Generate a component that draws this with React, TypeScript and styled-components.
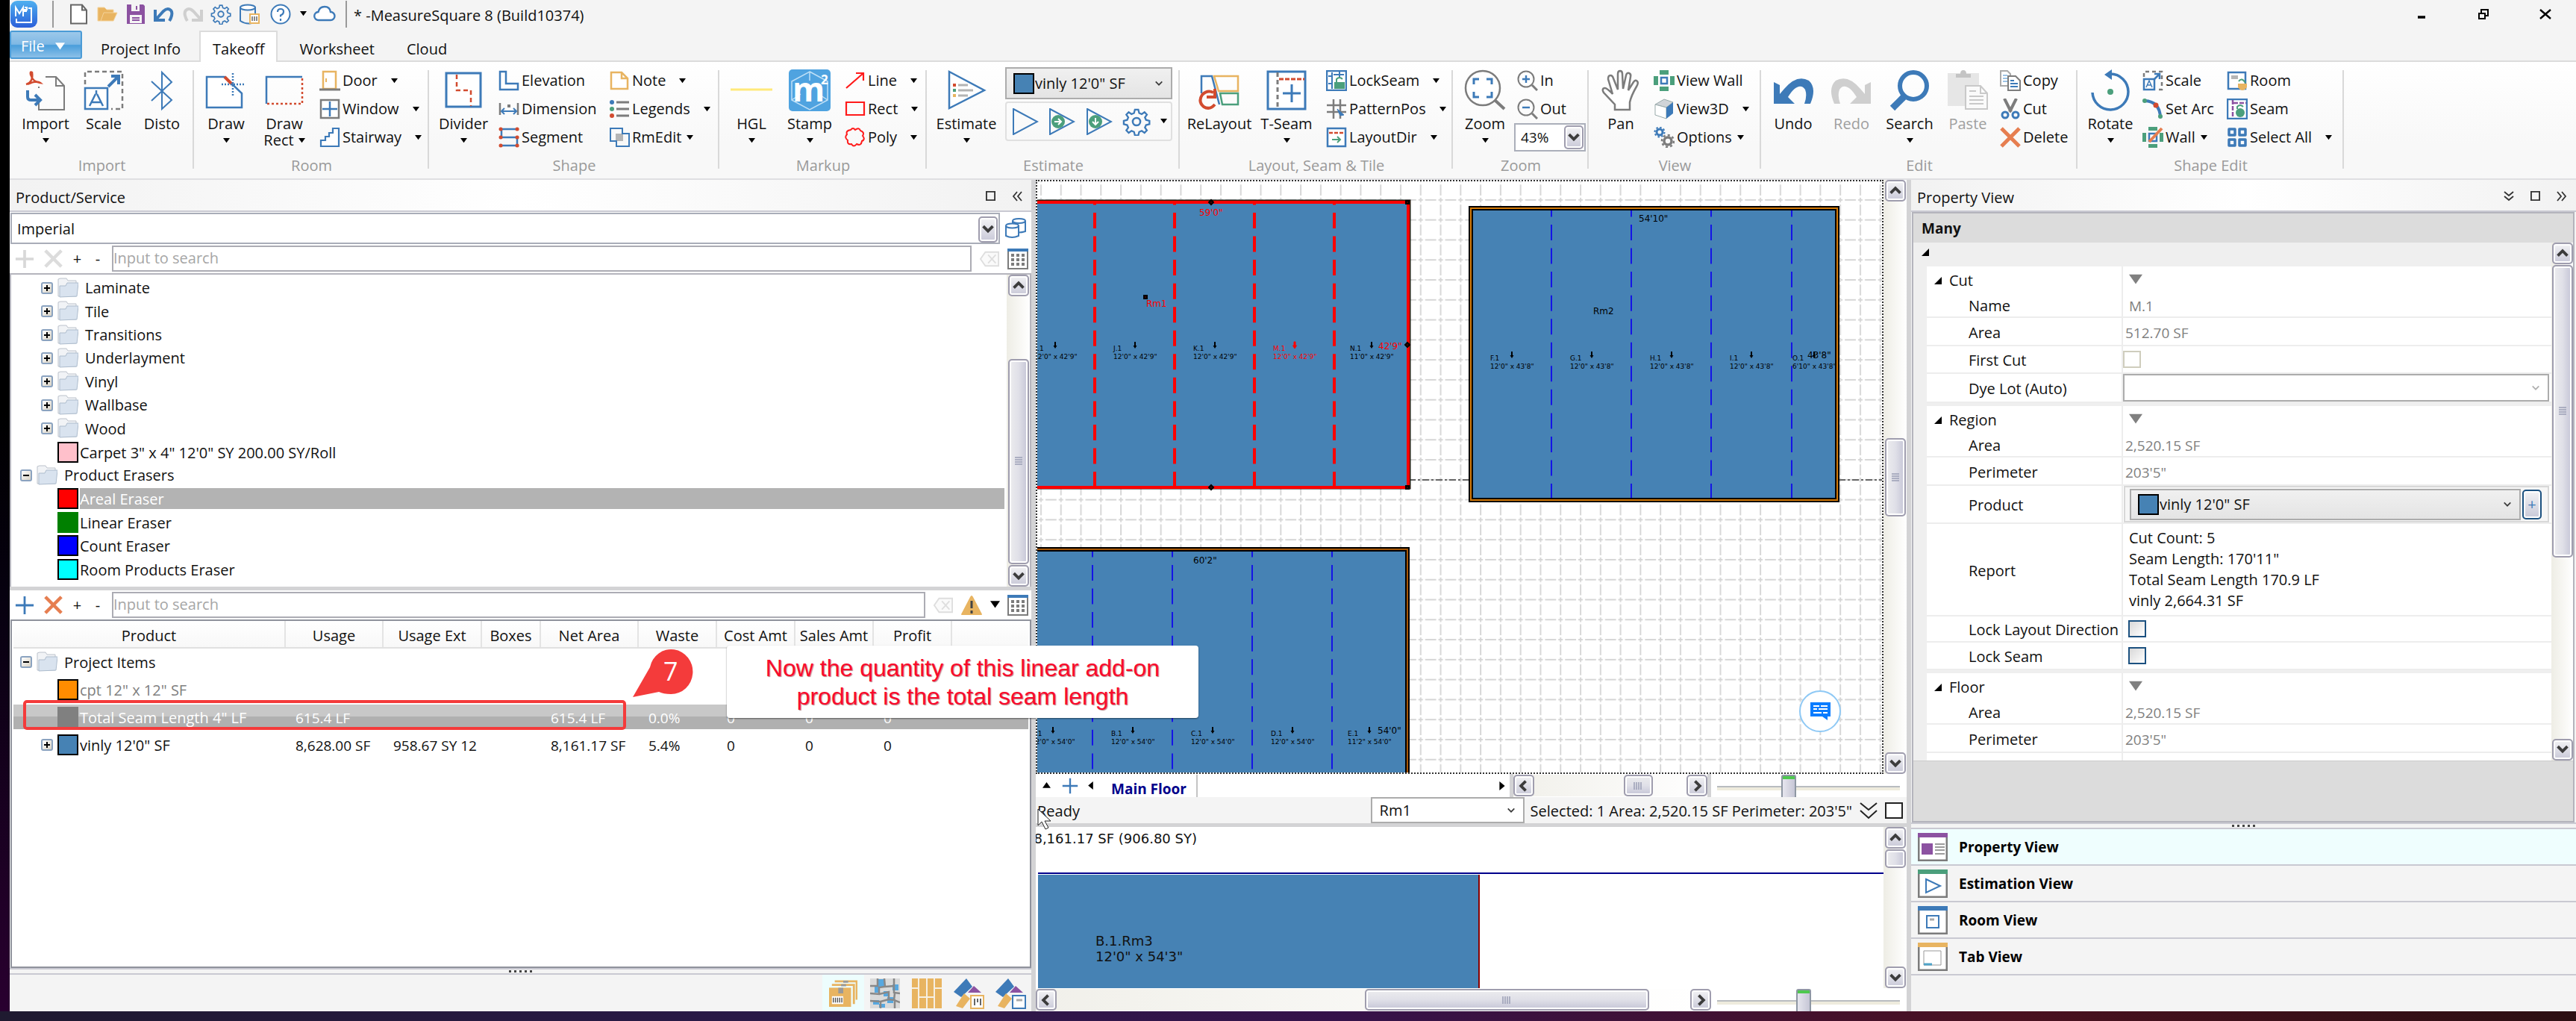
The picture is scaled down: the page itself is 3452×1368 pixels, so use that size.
import React from "react";
import styled, { createGlobalStyle, css } from "styled-components";

const BLUE = "#3d7ab8";
const GRAY = "#7c7c7c";
const RED = "#d24b2f";
const GREEN = "#4b9f7c";
const GOLD = "#e8b461";
const PURPLE = "#8c52a1";
const STEEL = "#4682b4";
const SPLIT = "#d3d3d5";
const LINE = "#c9c9d2";

const Global = createGlobalStyle`
  *, *::before, *::after { box-sizing: border-box; }
  body { margin: 0; background: #05010c; }
  body, button, input, select, table {
    font-family: "Open Sans", "Noto Sans", "Liberation Sans", sans-serif;
    font-size: 20px;
    line-height: 22px;
    color: #111;
  }
  button { border: 0; padding: 0; background: none; }
  svg { display: block; flex: none; }
`;

/* ---------- icons ---------- */

const gearPath =
  "M12 2h4l1 4 3 1.300 3.300-2.300 2.800 2.800-2.300 3.300 1.300 3 4 1v4l-4 1-1.300 3 2.300 3.300-2.800 2.800-3.300-2.300-3 1.300-1 4h-4l-1-4-3-1.300-3.300 2.300-2.800-2.800 2.300-3.300-1.300-3-4-1v-4l4-1 1.300-3-2.300-3.300 2.800-2.800 3.300 2.300 3-1.300z";

const art: Record<string, { box: string; draw: React.ReactNode }> = {
  logo: {
    box: "0 0 36 36",
    draw: (
      <>
        <defs>
          <linearGradient id="logo" x1="0" y1="0" x2="0" y2="1">
            <stop offset="0" stopColor="#4fb0f0" />
            <stop offset="1" stopColor="#2b5fd9" />
          </linearGradient>
        </defs>
        <rect width="36" height="36" rx="9" fill="url(#logo)" />
        <path d="M7 21V9l5 8 5-8v12M8 24v5h20V10h-4M19 9h3v3h-3v2h3" fill="none" stroke="#fff" strokeWidth="2" />
      </>
    ),
  },
  file: { box: "0 0 28 28", draw: <path d="M3 1.500h15l6 7v18H3zM18 1.500v7h6" fill="#fff" stroke="#666" strokeWidth="2" /> },
  folder: { box: "0 0 28 28", draw: <path d="M1 23V5h9l3 3h9v4h5l-5 11zM5 23l4-11h13" fill={GOLD} stroke="#f4d29a" /> },
  save: {
    box: "0 0 28 28",
    draw: (
      <>
        <path d="M2 1h22l2 2v24H2z" fill={PURPLE} />
        <path d="M8 1h11v9H8zM6 15h16v11H6z" fill="#f4f4f4" />
        <path d="M15 3v5M9 19h10M9 22h10" stroke={PURPLE} strokeWidth="2" />
      </>
    ),
  },
  undoS: { box: "0 0 28 28", draw: <path d="M2 8v14h13M3 21L13 10c6-6 13-2 11 6q-1 4-3 7" fill="none" stroke={BLUE} strokeWidth="4" /> },
  redoS: { box: "0 0 28 28", draw: <path d="M26 8v14H13M25 21L15 10C9 4 2 8 4 16q1 4 3 7" fill="none" stroke="#cfcfcf" strokeWidth="4" /> },
  gear: {
    box: "-1 1 30 30",
    draw: (
      <g fill="none" stroke={BLUE} strokeWidth="2">
        <path d={gearPath} transform="translate(1.500 1.500) scale(.9)" />
        <circle cx="14" cy="16" r="4" />
      </g>
    ),
  },
  dbSave: {
    box: "0 0 28 28",
    draw: (
      <>
        <path d="M2 5v18q8 5 15 3M22 5v8" fill="none" stroke={BLUE} strokeWidth="2" />
        <ellipse cx="12" cy="5" rx="10" ry="3.500" fill="#fff" stroke={BLUE} strokeWidth="2" />
        <path d="M15 14h12v12H15z" fill="#fff" stroke={GOLD} strokeWidth="2" />
        <path d="M18 17v6M21 17v6M24 17v6" stroke="#666" strokeWidth="1.500" />
      </>
    ),
  },
  help: {
    box: "0 0 28 28",
    draw: (
      <>
        <circle cx="14" cy="14" r="12.500" fill="#fff" stroke={BLUE} strokeWidth="2" />
        <path d="M10 11q0-4 4-4t4 3.500-4 5v2M14 20v3" fill="none" stroke={BLUE} strokeWidth="2.200" />
      </>
    ),
  },
  cloud: { box: "0 0 30 28", draw: <path d="M7 22a5.500 5.500 0 0 1-.5-11Q8 4 15 4q7 0 8 7a5.500 5.500 0 0 1 0 11z" fill="#fff" stroke={BLUE} strokeWidth="2.400" /> },
  importB: {
    box: "0 0 56 56",
    draw: (
      <g fill="none" strokeWidth="2">
        <path d="M19 25v-2M19 45v9h34V22L42 10H28M42 10v12h11" stroke={GRAY} />
        <path d="M2 20q10-3 8-16-3-2-2 3 3 10 13 11-5-4-17 2" stroke={RED} strokeWidth="2.500" />
        <path d="M4 28v9q0 4 5 4h10M14 34l7 7-7 7" stroke={BLUE} strokeWidth="4" />
      </g>
    ),
  },
  scaleB: {
    box: "0 0 56 56",
    draw: (
      <g fill="none" strokeWidth="2.500">
        <path d="M3 20V3h50v50H38" stroke={GRAY} strokeDasharray="6 4" />
        <path d="M3 25h30v28H3z" stroke={BLUE} fill="#fff" />
        <path d="M18 28v5M17 33L9 49M19 33l8 16M11 44h14" stroke={BLUE} />
        <path d="M34 23L48 9M38 9h10v11" stroke={BLUE} strokeWidth="4" />
      </g>
    ),
  },
  disto: { box: "0 0 56 56", draw: <path d="M14 16l27 25-13 12V4l13 13-27 25" fill="none" stroke={BLUE} strokeWidth="2" /> },
  drawB: {
    box: "0 0 56 56",
    draw: (
      <g fill="none" strokeWidth="2.500">
        <path d="M2 10h24l23 22v19H2z" stroke={BLUE} fill="#fff" />
        <path d="M26 10l10 10" stroke={RED} strokeWidth="4" />
        <path d="M37 5v32M22 20h32" stroke={BLUE} strokeDasharray="2 2" />
      </g>
    ),
  },
  drawRect: {
    box: "0 0 56 56",
    draw: (
      <g fill="none" strokeWidth="2.500">
        <path d="M4 46V10h48" stroke={BLUE} />
        <path d="M52 12v34H4" stroke={RED} strokeDasharray="3 3" />
      </g>
    ),
  },
  divider: {
    box: "0 0 56 56",
    draw: (
      <g fill="none" strokeWidth="3">
        <path d="M5 5h46v45H5z" stroke={BLUE} fill="#fff" />
        <path d="M19 7v21h19v21" stroke={RED} strokeDasharray="6 4" strokeWidth="2.500" />
      </g>
    ),
  },
  hgl: { box: "0 0 56 56", draw: <path d="M0 27h56" stroke="#ffe97a" strokeWidth="3" /> },
  stamp: {
    box: "0 0 56 56",
    draw: (
      <>
        <rect width="56" height="56" rx="5" fill="#4fa3e0" />
        <path d="M28 3l24 13v25L28 54 4 41V16zM28 3v12M4 41l12-8M52 41l-12-8" fill="none" stroke="#bfe0f7" strokeWidth="1.500" />
        <text x="5" y="43" fontSize="44" fontWeight="700" fill="#fff">m</text>
        <text x="43" y="20" fontSize="17" fontWeight="700" fill="#fff">2</text>
      </>
    ),
  },
  estimateB: {
    box: "0 0 56 56",
    draw: (
      <>
        <path d="M5 3l47 25L5 52z" fill="#fff" stroke={BLUE} strokeWidth="2.500" />
        <path d="M17 21h13M17 28h20M17 35h13" stroke="#b3b3b3" strokeWidth="3" />
        <path d="M10 19v4h4v-4z" fill={RED} />
        <path d="M10 26v4h4v-4z" fill={GREEN} />
        <path d="M10 33v4h4v-4z" fill={GOLD} />
      </>
    ),
  },
  relayout: {
    box: "0 0 56 56",
    draw: (
      <g fill="none" strokeWidth="2.500">
        <path d="M4 32V9h14l10 38" stroke={BLUE} />
        <path d="M21 9h32v20H27z" stroke={GOLD} />
        <path d="M29 32h24v15H32z" stroke={GREEN} />
        <path d="M20 31q-8-4-15 3-6 9 2 16 8 5 15-3M22 26v11H11" stroke={RED} strokeWidth="4" />
      </g>
    ),
  },
  tseam: {
    box: "0 0 56 56",
    draw: (
      <g fill="none" strokeWidth="3">
        <path d="M3 3h50v50H3z" stroke={BLUE} fill="#fff" />
        <path d="M16 4v48" stroke={GRAY} strokeDasharray="6 4" />
        <path d="M18 13h34" stroke={RED} strokeDasharray="6 2" />
        <path d="M35 20v24M23 32h24" stroke={BLUE} />
      </g>
    ),
  },
  zoomB: {
    box: "0 0 56 56",
    draw: (
      <g fill="none" strokeWidth="2.500">
        <circle cx="25" cy="25" r="23" stroke={GRAY} fill="#fff" />
        <path d="M41 41l13 12" stroke={GRAY} strokeWidth="4" />
        <path d="M13 20v-7h7M30 13h7v7M37 30v7h-7M20 37h-7v-7" stroke={BLUE} strokeWidth="3" />
      </g>
    ),
  },
  pan: {
    box: "0 0 56 56",
    draw: (
      <path
        d="M20 54V47L5 31q-3-5 1-6 3-1 11 8L11 13q0-5 3-5 3 0 4 4l6 15L24 6q0-4 3-4 3 0 3 4l1 20 4-18q1-4 4-3 3 1 2 5l-3 18 7-11q3-4 5-1 2 2-1 7-7 12-9 21v10z"
        fill="#fff"
        stroke={GRAY}
        strokeWidth="2.500"
      />
    ),
  },
  undoB: { box: "0 0 56 56", draw: <path d="M2 17v29h28l-9-9C30 22 39 19 44 27q3 8-1 19h8Q60 25 49 15 33 6 16 26l-6 7V21z" fill={BLUE} /> },
  redoB: { box: "0 0 56 56", draw: <path d="M54 17v29H26l9-9C26 22 17 19 12 27q-3 8 1 19H5Q-4 25 7 15 23 6 40 26l6 7V21z" fill="#cfcfcf" /> },
  searchB: {
    box: "0 0 56 56",
    draw: (
      <g fill="none" stroke={BLUE}>
        <circle cx="33" cy="22" r="18" strokeWidth="6" />
        <path d="M20 37L5 52" strokeWidth="9" />
      </g>
    ),
  },
  pasteB: {
    box: "0 0 56 56",
    draw: (
      <>
        <path d="M1 5h42v44H1z" fill="#e6e6e6" />
        <path d="M12 11V6h6q0-5 4-5t4 5h6v5z" fill="#c4c4c4" />
        <path d="M25 22h20l9 10v21H25zM45 22v10h9M30 29h9M30 36h19M30 41h19M30 46h19" fill="#fafafa" stroke="#c9c9c9" strokeWidth="2" />
      </>
    ),
  },
  rotateB: {
    box: "0 0 56 56",
    draw: (
      <>
        <path d="M4 31a24 24 0 1 0 24-25" fill="none" stroke={BLUE} strokeWidth="3.500" />
        <path d="M20 7L30 0v14z" fill={BLUE} />
        <circle cx="28" cy="30" r="4" fill={GREEN} />
      </>
    ),
  },
  door: { box: "0 0 28 28", draw: <><path d="M5 2h17v23H5z" fill="#fff" stroke={GOLD} strokeWidth="2.500" /><path d="M9 11v5" stroke={GOLD} strokeWidth="2" /><path d="M0 26h28" stroke={GRAY} strokeWidth="3" /></> },
  window: { box: "0 0 28 28", draw: <><path d="M2 2h24v24H2z" fill="#fff" stroke={GRAY} strokeWidth="2.500" /><path d="M14 4v20M4 14h20" stroke={BLUE} strokeWidth="2.500" /></> },
  stair: { box: "0 0 28 28", draw: <path d="M26 2v24H2v-8h6v-5h5V8h5V2z" fill="#fff" stroke={BLUE} strokeWidth="2.200" /> },
  elevation: { box: "0 0 28 28", draw: <path d="M2 2h8v16h16v8H2z" fill="#fff" stroke={BLUE} strokeWidth="2.500" /> },
  dimension: { box: "0 0 28 28", draw: <><path d="M2 6v16M26 6v16" stroke={GRAY} strokeWidth="2.500" /><path d="M14 8v4" stroke={GRAY} strokeWidth="4" /><path d="M4 17h20M8 13l-4 4 4 4M20 13l4 4-4 4" fill="none" stroke={BLUE} strokeWidth="2" /></> },
  segment: { box: "0 0 28 28", draw: <><path d="M25 3H4v11h21v11H4" fill="none" stroke={BLUE} strokeWidth="2.500" /><path d="M3 3h.1M25 3h.1M3 14h.1M25 14h.1M3 25h.1M25 25h.1" stroke={RED} strokeWidth="5" strokeLinecap="round" /></> },
  note: { box: "0 0 28 28", draw: <path d="M3 3h14l8 8v14H3zM17 3v8h8" fill="#fff" stroke={GOLD} strokeWidth="2.500" /> },
  legends: { box: "0 0 28 28", draw: <><path d="M10 5h17M10 14h17M10 23h17" stroke={GRAY} strokeWidth="3" /><circle cx="4" cy="5" r="3" fill={BLUE} /><circle cx="4" cy="14" r="3" fill={GREEN} /><circle cx="4" cy="23" r="3" fill={RED} /></> },
  rmedit: { box: "0 0 28 28", draw: <><path d="M9 9h10v10H9z" fill="#b5b5b5" /><path d="M2 2h16v7h9v17H10v-7H2z" fill="none" stroke={BLUE} strokeWidth="2" /></> },
  line: { box: "0 0 28 28", draw: <path d="M2 24L25 4M15 4h10v10" fill="none" stroke="#ff1a1a" strokeWidth="2.200" /> },
  rect: { box: "0 0 28 28", draw: <path d="M2 5h24v17H2z" fill="none" stroke="#ff1a1a" strokeWidth="2.200" /> },
  poly: { box: "0 0 28 28", draw: <path d="M8 4q3-4 6 0 5-4 7 1 6 2 3 7 4 5-1 7-1 7-7 4-4 5-7 0-6 1-5-5-5-4-1-8-2-5 5-6z" fill="none" stroke="#ff1a1a" strokeWidth="2" /> },
  lockseam: { box: "0 0 28 28", draw: <><path d="M1 1h26v26H1z" fill="#fff" stroke={BLUE} strokeWidth="2.500" /><path d="M8 3v22M18 2v9M3 8h5M3 18h5M10 6h14" stroke={BLUE} strokeWidth="2" /><path d="M11 16h14v9H11z" fill={GREEN} /><path d="M14 16v-4q4-4 8 0" fill="none" stroke={GREEN} strokeWidth="2" /></> },
  pattern: { box: "0 0 28 28", draw: <><path d="M10 1v26M19 1v26M1 9h26M1 18h26" stroke={GRAY} strokeWidth="2.500" /><path d="M15 14l9 8-5 1z" fill={BLUE} stroke={BLUE} /></> },
  layoutdir: { box: "0 0 28 28", draw: <><path d="M2 2h24v24H2z" fill="#fff" stroke={BLUE} strokeWidth="2.500" /><path d="M4 8h20" stroke={RED} strokeWidth="2.500" strokeDasharray="5 2" /><path d="M8 17h11M15 13l4 4-4 4" fill="none" stroke={GREEN} strokeWidth="2" /></> },
  zin: { box: "0 0 28 28", draw: <g fill="none" strokeWidth="2"><circle cx="12" cy="12" r="10.500" stroke={GRAY} /><path d="M20 20l7 7" stroke={GRAY} strokeWidth="3" /><path d="M7 12h10M12 7v10" stroke={BLUE} strokeWidth="2.400" /></g> },
  zout: { box: "0 0 28 28", draw: <g fill="none" strokeWidth="2"><circle cx="12" cy="12" r="10.500" stroke={GRAY} /><path d="M20 20l7 7" stroke={GRAY} strokeWidth="3" /><path d="M7 12h10" stroke={BLUE} strokeWidth="2.400" /></g> },
  viewwall: { box: "0 0 28 28", draw: <><path d="M8 0h12v6H8zM8 22h12v6H8zM0 8h6v12H0zM22 8h6v12h-6z" fill={GREEN} /><path d="M10 10h8v8h-8z" fill="#fff" stroke={BLUE} strokeWidth="2.500" /></> },
  view3d: { box: "0 0 28 28", draw: <><path d="M2 8L14 1l12 4-9 7z" fill="#d0d4d8" stroke="#9aa" /><path d="M2 8l15 4v15L2 22z" fill="#fff" stroke="#9aa" /><path d="M17 12l9-7v15l-9 7z" fill={BLUE} /></> },
  options: {
    box: "0 0 28 28",
    draw: (
      <g fill="none">
        <circle cx="8" cy="7" r="4" stroke={BLUE} strokeWidth="3" />
        <circle cx="8" cy="7" r="6.500" stroke={BLUE} strokeWidth="2" strokeDasharray="2.500 2.500" />
        <circle cx="19" cy="19" r="5" stroke={GRAY} strokeWidth="3.500" />
        <circle cx="19" cy="19" r="8" stroke={GRAY} strokeWidth="2.500" strokeDasharray="3 3.200" />
      </g>
    ),
  },
  copy: { box: "0 0 28 28", draw: <><path d="M1 1h9l4 4v16H1z" fill="#fff" stroke="#aaa" strokeWidth="2" /><path d="M4 7h6M4 11h6M4 15h6" stroke="#9cc3e6" strokeWidth="2" /><path d="M11 8h10l6 6v13H11z" fill="#fff" stroke={GRAY} strokeWidth="2" /><path d="M14 14h5M14 18h10M14 22h10" stroke={BLUE} strokeWidth="2" /></> },
  cut: { box: "0 0 28 28", draw: <g fill="none"><path d="M6 0l9 18M22 0l-9 18" stroke={GRAY} strokeWidth="4" /><circle cx="7" cy="22" r="4" stroke={BLUE} strokeWidth="3" /><circle cx="21" cy="22" r="4" stroke={BLUE} strokeWidth="3" /></g> },
  del: { box: "0 0 28 28", draw: <path d="M2 2l24 24M26 2L2 26" stroke="#e67e50" strokeWidth="5" /> },
  delOff: { box: "0 0 28 28", draw: <path d="M2 2l24 24M26 2L2 26" stroke="#dcdcdc" strokeWidth="5" /> },
  add: { box: "0 0 28 28", draw: <path d="M14 1v26M1 14h26" stroke={BLUE} strokeWidth="3" /> },
  addOff: { box: "0 0 28 28", draw: <path d="M14 1v26M1 14h26" stroke="#d8d8d8" strokeWidth="4" /> },
  scaleS: { box: "0 0 28 28", draw: <g fill="none" strokeWidth="2.500"><path d="M2 9V2h24v24h-7" stroke={GRAY} strokeDasharray="5 4" /><path d="M2 12h14v14H2z" stroke={BLUE} fill="#fff" /><path d="M5 23l4-9 4 9M6 20h6" stroke={BLUE} strokeWidth="1.500" /><path d="M15 13l8-8M16 5h7v7" stroke={BLUE} /></g> },
  arc: { box: "0 0 28 28", draw: <><path d="M3 3q20 1 21 22" fill="none" stroke={BLUE} strokeWidth="4" /><circle cx="3" cy="3" r="3" fill={GREEN} /><circle cx="18" cy="9" r="3.500" fill={RED} /><circle cx="24" cy="24" r="3" fill={GREEN} /></> },
  wall: { box: "0 0 28 28", draw: <><path d="M8 0h12v5H8zM8 23h12v5H8zM0 8h5v12H0zM23 8h5v12h-5z" fill={GREEN} /><path d="M9 9h10v10H9z" fill="#fff" stroke={BLUE} strokeWidth="2.500" /><path d="M9 20L26 2" stroke="#e67e50" strokeWidth="4" /></> },
  room: { box: "0 0 28 28", draw: <><path d="M2 3h23v22H2z" fill="#fff" stroke={BLUE} strokeWidth="2.500" /><path d="M6 7h9v5H6z" fill="#b5b5b5" /><path d="M15 18h12v5q-6 8-12 0z" fill={GOLD} /><path d="M16 15q4-6 9 2" fill="none" stroke={GREEN} strokeWidth="2" /></> },
  seam: { box: "0 0 28 28", draw: <><path d="M1 1h26v26H1z" fill="#fff" stroke={BLUE} strokeWidth="2.500" /><path d="M8 2v24M9 6h17" stroke={PURPLE} strokeWidth="2.500" strokeDasharray="6 2" /><circle cx="18" cy="19" r="6" fill={GREEN} /><path d="M14 14v-3q4-4 8 0" fill="none" stroke={GREEN} strokeWidth="2" /></> },
  selectall: { box: "0 0 28 28", draw: <path d="M3 3h8v8H3zM17 3h8v8h-8zM3 17h8v8H3zM17 17h8v8h-8z" fill="#fff" stroke={BLUE} strokeWidth="3.500" strokeLinejoin="round" /> },
  play: { box: "0 0 36 36", draw: <path d="M2 1l32 17L2 35z" fill="none" stroke={BLUE} strokeWidth="2" /> },
  playR: { box: "0 0 36 36", draw: <><path d="M2 1l32 17L2 35z" fill="none" stroke={BLUE} strokeWidth="2" /><circle cx="13" cy="18" r="9" fill={GREEN} /><path d="M8 18h9M13 14l4 4-4 4" fill="none" stroke="#fff" strokeWidth="2" /></> },
  playD: { box: "0 0 36 36", draw: <><path d="M2 1l32 17L2 35z" fill="none" stroke={BLUE} strokeWidth="2" /><circle cx="13" cy="18" r="9" fill={GREEN} /><path d="M13 13v9M9 18l4 4 4-4" fill="none" stroke="#fff" strokeWidth="2" /></> },
  dbs: { box: "0 0 28 28", draw: <g fill="#fff" stroke={BLUE} strokeWidth="2"><path d="M10 4v14q8 3 17 0V4" /><ellipse cx="18.500" cy="4" rx="8.500" ry="3" /><path d="M1 10v14q8 4 17 0V10" /><ellipse cx="9.500" cy="10.500" rx="8.500" ry="3" /></g> },
  grid: { box: "0 0 28 28", draw: <><path d="M1 1h26v26H1z" fill="#fff" stroke={GRAY} strokeWidth="2" /><path d="M0 2h28" stroke={BLUE} strokeWidth="4" /><path d="M5 9h18M5 15h18M5 21h18" stroke={GRAY} strokeWidth="4" strokeDasharray="4 3" /></> },
  erase: { box: "0 0 28 28", draw: <path d="M8 4h19v20H8L1 14zM12 8l11 12M23 8L12 20" fill="#fafafa" stroke="#dedede" strokeWidth="2" /> },
  warn: { box: "0 0 28 28", draw: <><path d="M14 1q1 0 2 2l12 23q0 1-1 1H1q-1 0-1-1L12 3q1-2 2-2z" fill={GOLD} /><path d="M14 8v10M14 21v4" stroke="#444" strokeWidth="3" /></> },
  boxes: { box: "0 0 40 40", draw: <><path d="M8 3h31v26M4 8h31v27" fill="none" stroke={GOLD} strokeWidth="3" /><path d="M0 12h31v27H0z" fill={GOLD} /><path d="M13 12h7v8h-7zM20 2h7v3h-7zM17 7h7v3h-7z" fill="#999" /><path d="M4 24h16v11H4z" fill="#fff" /><path d="M6 26v7M9 26v7M12 26v7M15 26v7M18 26v7" stroke="#555" strokeWidth="1.500" /></> },
  tiles: { box: "0 0 40 40", draw: <><path d="M0 0h40v40H0z" fill="#dadada" /><path d="M11 1h8v10h-8zM30 8h8v8h-8zM6 11h6v8H6zM18 17h7v7h-7zM4 29h8v6H4zM23 25h8v8h-8zM12 34h8v5h-8z" fill="#57a8e0" /><path d="M10 0v10H0M19 0l1 11-8 1v9L0 20M20 11l12-1V0M32 10v9l8 1M12 21l13-3v10l-11 3v9M25 28l8 1v11M0 30l14 1M33 20l-1 9 8 3" fill="none" stroke="#888" strokeWidth="2.500" /></> },
  wood: { box: "0 0 40 40", draw: <><path d="M0 0h40v40H0z" fill={GOLD} /><path d="M9 0v40M20 0v40M30 0v40M0 13h9M10 25h10M20 25h10M30 13h10" stroke="#f6efe2" strokeWidth="2" /></> },
  matA: { box: "0 0 42 42", draw: <><path d="M18 1l8 11-15 14L1 19z" fill={BLUE} /><path d="M28 11l10 9H20z" fill={PURPLE} /><path d="M15 21l8 7-10 13-9-3z" fill={GOLD} /><path d="M24 24h17v17H24z" fill="#fff" stroke={GOLD} strokeWidth="2" /><path d="M29 28v9M33 28v5M37 28v9" stroke="#666" strokeWidth="2" /></> },
  matB: { box: "0 0 42 42", draw: <><path d="M18 1l8 11-15 14L1 19z" fill={BLUE} /><path d="M28 11l10 9H20z" fill={PURPLE} /><path d="M15 21l8 7-10 13-9-3z" fill={GOLD} /><path d="M24 24h17v17H24z" fill="#fff" stroke={BLUE} strokeWidth="2" /><path d="M29 30h8" stroke="#aaa" strokeWidth="3" /></> },
  vProp: { box: "0 0 40 38", draw: <><path d="M1 1h38v36H1z" fill="#fff" stroke={GRAY} strokeWidth="3" /><path d="M0 3h40" stroke={PURPLE} strokeWidth="6" /><path d="M5 14h15v15H5z" fill={PURPLE} /><path d="M23 15h13M23 19h13M23 23h13M23 28h13" stroke={GRAY} strokeWidth="1.500" /></> },
  vEst: { box: "0 0 40 38", draw: <><path d="M1 1h38v36H1z" fill="#fff" stroke={GRAY} strokeWidth="3" /><path d="M0 3h40" stroke={GREEN} strokeWidth="6" /><path d="M11 13l19 9-19 9z" fill="#fff" stroke={BLUE} strokeWidth="2" /></> },
  vRoom: { box: "0 0 40 38", draw: <><path d="M1 1h38v36H1z" fill="#fff" stroke={GRAY} strokeWidth="3" /><path d="M0 3h40" stroke={BLUE} strokeWidth="6" /><path d="M12 13h16v16H12z" fill="#fff" stroke={BLUE} strokeWidth="2" /><path d="M16 18h6" stroke="#aaa" strokeWidth="3" /></> },
  vTab: { box: "0 0 40 38", draw: <><path d="M1 1h38v36H1z" fill="#fff" stroke={GRAY} strokeWidth="3" /><path d="M0 3h40" stroke={GOLD} strokeWidth="6" /><path d="M8 11h23v19H8z" fill="#fff" stroke="#999" /><path d="M8 29h11" stroke="#4fa3c8" strokeWidth="3" /></> },
  dbox: { box: "0 0 24 24", draw: <path d="M1 2h22v20H1z" fill="#fff" stroke="#222" strokeWidth="2" /> },
  ddown: { box: "0 0 24 24", draw: <path d="M1 2l11 9L23 2M1 12l11 10 11-10" fill="none" stroke="#222" strokeWidth="2" /> },
  sq: { box: "0 0 14 14", draw: <path d="M1 1h12v12H1z" fill="none" stroke="#333" strokeWidth="2" /> },
  left2: { box: "0 0 14 14", draw: <path d="M7 1L2 7l5 6M13 1L8 7l5 6" fill="none" stroke="#333" strokeWidth="1.800" /> },
  right2: { box: "0 0 14 14", draw: <path d="M1 1l5 6-5 6M7 1l5 6-5 6" fill="none" stroke="#333" strokeWidth="1.800" /> },
  down2: { box: "0 0 14 14", draw: <path d="M1 1l6 5 6-5M1 7l6 5 6-5" fill="none" stroke="#333" strokeWidth="1.800" /> },
  min: { box: "0 0 16 16", draw: <path d="M3 12h10" stroke="#000" strokeWidth="3.500" /> },
  restore: { box: "0 0 16 16", draw: <path d="M2 7h8v7H2zM5 6V2h9v8h-4" fill="none" stroke="#000" strokeWidth="2" /> },
  close: { box: "0 0 16 16", draw: <path d="M1 2l14 12M15 2L1 14" stroke="#000" strokeWidth="2.400" /> },
  treeFolder: { box: "0 0 28 28", draw: <><path d="M1 25V2l3-1h8l2 3h11v21z" fill="#f1f3f6" stroke="#bcc2cb" /><path d="M3 26V11h8l2-4h15l-2 18z" fill="#d9e3ef" stroke="#adbccd" /></> },
};

const Icon = ({ name, size = 28, h }: { name: string; size?: number; h?: number }) => (
  <svg width={size} height={h ?? size} viewBox={art[name].box} aria-hidden="true">
    {art[name].draw}
  </svg>
);

const tri = { down: "M0 1h10L5 8z", up: "M0 8h10L5 1z", left: "M8 0v10L2 5z", right: "M2 0v10l6-5z" };
const Caret = ({ dir = "down", size = 10, color = "#000" }: { dir?: keyof typeof tri; size?: number; color?: string }) => (
  <svg width={size} height={size} viewBox="0 0 10 10" aria-hidden="true">
    <path d={tri[dir]} fill={color} />
  </svg>
);
const chev = { down: "M2 4l5 5 5-5", up: "M2 9l5-5 5 5", left: "M9 2L4 7l5 5", right: "M5 2l5 5-5 5" };
const Chevron = ({ dir = "down", size = 18, w = 3 }: { dir?: keyof typeof chev; size?: number; w?: number }) => (
  <svg width={size} height={size} viewBox="0 0 14 14" aria-hidden="true">
    <path d={chev[dir]} fill="none" stroke="#3c3c3c" strokeWidth={w} />
  </svg>
);

/* ---------- frame ---------- */

const Desktop = styled.div`
  height: 100vh;
  min-height: 1000px;
  padding: 0 0 13px 13px;
  background:
    linear-gradient(90deg, #1f1a30, #2a1a48 30%, #35124a 52%, #4a1120 78%, #2c0f12) bottom / 100% 13px no-repeat,
    linear-gradient(#000 40%, #06010f 58%, #2a0030);
`;
const Window = styled.div`
  height: 100%;
  display: flex;
  flex-direction: column;
  background: #f4f4f4;
  overflow: hidden;
`;
const TitleBar = styled.header`
  height: 41px;
  display: flex;
  align-items: center;
  padding: 0 34px 4px 1px;
`;
const Rule = styled.span<{ $l: number; $r: number }>`
  width: 2px;
  height: 36px;
  background: #9a9a9a;
  margin: 0 ${(p) => p.$r}px 0 ${(p) => p.$l}px;
`;
const QuickButton = styled.button<{ $w?: number }>`
  width: ${(p) => p.$w ?? 38}px;
  height: 34px;
  display: flex;
  align-items: center;
  justify-content: center;
`;
const WindowTitle = styled.h1`
  flex: 1;
  margin: 5px 0 0;
  font-size: 20px;
  font-weight: 400;
`;
const SysButton = styled(QuickButton)`
  width: 83px;
  &:last-child { margin-right: -34px; }
`;

const TabStrip = styled.nav`
  height: 42px;
  display: flex;
  align-items: stretch;
  border-bottom: 2px solid #dcdcdc;
`;
const FileTab = styled.button`
  width: 97px;
  margin-bottom: 2px;
  border: 2px solid #4b9bd6;
  border-radius: 3px;
  background: linear-gradient(#9cc8ea, #7fb8e4 48%, #4a9edb 52%, #8cc0e8);
  color: #fff;
  display: flex;
  align-items: center;
  gap: 14px;
  padding: 4px 0 0 13px;
`;
const Tab = styled.a<{ $on?: boolean }>`
  padding: 14px 18px 0;
  color: #111;
  text-decoration: none;
  margin-left: 7px;
  ${(p) =>
    p.$on &&
    css`
      background: #fff;
      border: 2px solid #dcdcdc;
      border-bottom: 0;
      margin: 0 4px -2px 7px;
      padding: 12px 16px 0;
    `}
`;

/* ---------- ribbon ---------- */

const Ribbon = styled.section`
  height: 158px;
  flex: none;
  display: flex;
  background: linear-gradient(#fff, #f8f8f8 70%);
  border-bottom: 2px solid #dfdfe2;
`;
const GroupBox = styled.div<{ $w: number; $pad: number }>`
  width: ${(p) => p.$w}px;
  flex: none;
  display: flex;
  flex-direction: column;
  padding-left: ${(p) => p.$pad}px;
  background: linear-gradient(#d9d9d9, #d9d9d9) right 11px / 2px 132px no-repeat;
`;
const GroupBody = styled.div`
  flex: 1;
  min-height: 0;
  display: flex;
  align-items: flex-start;
`;
const GroupName = styled.div<{ $pad: number }>`
  height: 28px;
  margin-left: -${(p) => p.$pad}px;
  text-align: center;
  color: #9a9a9a;
`;
const Big = styled.button<{ $w?: number; $off?: boolean }>`
  width: ${(p) => p.$w ?? 78}px;
  padding-top: 10px;
  display: flex;
  flex-direction: column;
  align-items: center;
  color: ${(p) => (p.$off ? "#9f9f9f" : "#111")};
`;
const BigLabel = styled.span`
  margin-top: 6px;
  line-height: 22px;
  white-space: nowrap;
`;
const BigCaret = styled.span`
  height: 22px;
  display: flex;
  align-items: center;
  gap: 6px;
`;
const Stack = styled.div<{ $pad?: number; $w?: number }>`
  padding: 6px 0 0 ${(p) => p.$pad ?? 8}px;
  ${(p) => p.$w && `width: ${p.$w}px;`}
  flex: none;
`;
const Small = styled.button<{ $tight?: boolean; $in?: boolean }>`
  height: 38px;
  display: flex;
  align-items: center;
  gap: 3px;
  white-space: nowrap;
  padding-left: ${(p) => (p.$in ? 4 : 0)}px;
  svg + span + svg { margin-left: ${(p) => (p.$tight ? 4 : 15)}px; }
`;

const BigBtn = ({ icon, label, caret, second, w, off }: { icon: string; label: string; caret?: boolean; second?: string; w?: number; off?: boolean }) => (
  <Big $w={w} $off={off}>
    <Icon name={icon} size={56} />
    <BigLabel>{label}</BigLabel>
    {(caret || second) && (
      <BigCaret>
        {second}
        <Caret size={9} />
      </BigCaret>
    )}
  </Big>
);
const SmallBtn = ({ icon, label, caret }: { icon: string; label: string; caret?: "wide" | "tight" }) => (
  <Small $tight={caret === "tight"}>
    <Icon name={icon} />
    <span>{label}</span>
    {caret && <Caret size={9} />}
  </Small>
);
const Group = ({ name, w, pad, children }: { name: string; w: number; pad: number; children: React.ReactNode }) => (
  <GroupBox $w={w} $pad={pad}>
    <GroupBody>{children}</GroupBody>
    <GroupName $pad={pad}>{name}</GroupName>
  </GroupBox>
);

/* ---------- shared controls ---------- */

const Picker = styled.label<{ $h: number; $flat?: boolean; $grow?: boolean }>`
  height: ${(p) => p.$h}px;
  display: flex;
  align-items: center;
  min-width: 0;
  ${(p) => p.$grow && "flex: 1;"}
  padding: 0 10px 0 9px;
  border: 2px solid #acacac;
  background: ${(p) => (p.$flat ? "#fff" : "linear-gradient(#f0f0f0, #e4e4e4)")};
`;
const PickerSelect = styled.select`
  flex: 1;
  min-width: 0;
  appearance: none;
  border: 0;
  padding: 0 0 0 1px;
  background: transparent;
`;
const Swatch = styled.span<{ $c: string; $edge?: string }>`
  width: 28px;
  height: 28px;
  flex: none;
  border: 2px solid ${(p) => p.$edge ?? "#000"};
  background: ${(p) => p.$c};
`;
const glossy = css`
  border: 2px solid #9f9dae;
  border-radius: 5px;
  box-shadow: inset 0 0 0 2px #fff;
  display: flex;
  align-items: center;
  justify-content: center;
`;
const Knob = styled.button<{ $w?: number; $h?: number }>`
  ${glossy}
  width: ${(p) => p.$w ?? 28}px;
  height: ${(p) => p.$h ?? 30}px;
  flex: none;
  background: linear-gradient(#f3f3f5, #c9c9d8);
`;
const Bar = styled.div<{ $dir: "v" | "h"; $w: number }>`
  display: flex;
  flex: none;
  align-items: center;
  ${(p) =>
    p.$dir === "v"
      ? css`
          flex-direction: column;
          width: ${p.$w}px;
          background: linear-gradient(90deg, #eeede5, #fff);
        `
      : css`
          width: ${p.$w}px;
          background: linear-gradient(90deg, #f1f0ea, #fff);
        `}
`;
const Gap = styled.span<{ $n: number }>`
  flex: ${(p) => p.$n} 1 0;
`;
const Thumb = styled.span<{ $n: number; $dir: "v" | "h" }>`
  ${glossy}
  flex: ${(p) => p.$n} 1 0;
  ${(p) =>
    p.$dir === "v"
      ? "width: 28px; background: linear-gradient(90deg, #ececee, #e0e0e8 50%, #c5c5d6);"
      : "height: 29px; background: linear-gradient(#ececee, #e0e0e8 50%, #c5c5d6);"}
`;
const Grip = ({ dir }: { dir: "v" | "h" }) => (
  <svg width="12" height="12" viewBox="0 0 12 12" aria-hidden="true">
    <path d={dir === "v" ? "M1 1h10M1 4h10M1 7h10M1 10h10" : "M1 1v10M4 1v10M7 1v10M10 1v10"} stroke="#9a9fb5" strokeWidth="1.500" />
  </svg>
);
const Scroll = ({ dir = "v", size, a, t, b, grip = true }: { dir?: "v" | "h"; size: number; a: number; t: number; b: number; grip?: boolean }) => (
  <Bar $dir={dir} $w={size}>
    <Knob aria-label="Scroll back" $h={29}>
      <Chevron dir={dir === "v" ? "up" : "left"} />
    </Knob>
    <Gap $n={a} />
    <Thumb $n={t} $dir={dir}>{grip && <Grip dir={dir} />}</Thumb>
    <Gap $n={b} />
    <Knob aria-label="Scroll on" $h={29}>
      <Chevron dir={dir === "v" ? "down" : "right"} />
    </Knob>
  </Bar>
);
const Slider = styled.input`
  appearance: none;
  width: 245px;
  height: 30px;
  margin: 0 9px 0 8px;
  flex: none;
  background: linear-gradient(#b9bcc0, #b9bcc0) 0 15px / 100% 2px no-repeat,
    linear-gradient(#eeebdd, #eeebdd) 0 17px / 100% 4px no-repeat;
  &::-webkit-slider-thumb {
    appearance: none;
    width: 20px;
    height: 30px;
    border: 2px solid #8e97a3;
    border-bottom: 0;
    border-radius: 3px 3px 0 0;
    background: linear-gradient(#4ec94e 4px, transparent 4px), linear-gradient(90deg, #e6e6ee, #c6c6d6);
  }
`;
const DotBar = styled.div`
  height: 9px;
  flex: none;
  display: flex;
  align-items: center;
  justify-content: center;
  gap: 4px;
  border-top: 2px solid ${LINE};
  border-bottom: 2px solid ${LINE};
`;
const Dot = styled.span`
  width: 3px;
  height: 3px;
  background: #444;
`;
const Dots = () => (
  <DotBar>
    <Dot /><Dot /><Dot /><Dot /><Dot />
  </DotBar>
);

/* ---------- work area ---------- */

const Work = styled.main`
  flex: 1;
  min-height: 0;
  display: grid;
  grid-template-columns: minmax(0, 1375fr) minmax(0, 1173fr) minmax(0, 891fr);
`;
const Pane = styled.section`
  display: flex;
  flex-direction: column;
  min-height: 0;
  border-right: 6px solid ${SPLIT};
  &:last-child { border-right: 0; }
`;
const PaneHead = styled.div`
  height: 43px;
  flex: none;
  display: flex;
  align-items: center;
  gap: 22px;
  padding: 2px 12px 0 8px;
  background: linear-gradient(90deg, #f2f2f2, #fff 50%, #f2f2f2);
  border-bottom: 2px solid ${LINE};
`;
const PaneTitle = styled.h2`
  flex: 1;
  margin: 4px 0 0;
  font-size: 20px;
  font-weight: 400;
`;
const UnitRow = styled.div`
  display: flex;
  align-items: center;
  gap: 7px;
  padding: 1px 7px 0 1px;
  background: #fff;
`;
const UnitBox = styled.label`
  flex: 1;
  height: 42px;
  display: flex;
  align-items: center;
  border: 2px solid #a9adb8;
  padding: 2px 1px 0 6px;
`;
const FilterRow = styled.div<{ $h: number }>`
  height: ${(p) => p.$h}px;
  flex: none;
  display: flex;
  align-items: center;
  gap: 10px;
  padding: 0 4px 0 6px;
  background: #fff;
`;
const ToolButton = styled.button<{ $w?: number }>`
  width: ${(p) => p.$w ?? 28}px;
  height: 30px;
  flex: none;
  display: flex;
  align-items: center;
  justify-content: center;
`;
const FilterInput = styled.input`
  flex: 1;
  height: 35px;
  border: 2px solid #acacb4;
  padding: 0 0 2px;
  background: #fff;
  &::placeholder { color: #a6a6a6; opacity: 1; }
`;
const TreeBox = styled.div`
  flex: 422 1 0;
  min-height: 0;
  display: flex;
  background: #fff;
  border: 2px solid #b5b5bd;
  border-bottom: 0;
`;
const TreeList = styled.ul`
  flex: 1;
  margin: 0;
  padding: 2px 3px 8px 0;
  list-style: none;
  display: flex;
  flex-direction: column;
`;
const TreeRow = styled.li<{ $depth: number }>`
  flex: 1;
  display: flex;
  align-items: center;
  padding-left: ${(p) => p.$depth * 28 + 12}px;
`;
const Expander = styled.button<{ $open?: boolean }>`
  width: 16px;
  height: 16px;
  margin-right: 6px;
  flex: none;
  border: 2px solid #8ba3c0;
  border-radius: 3px;
  background:
    linear-gradient(#000, #000) center / 8px 2px no-repeat,
    linear-gradient(#000, #000) center / ${(p) => (p.$open ? "0 0" : "2px 8px")} no-repeat,
    linear-gradient(135deg, #fff, #d8d2c4);
`;
const NodeName = styled.span`
  padding: 1px 0 0 9px;
`;
const LeafName = styled.span<{ $on?: boolean }>`
  margin-left: 2px;
  height: 28px;
  line-height: 30px;
  white-space: nowrap;
  ${(p) => p.$on && "flex: 1; background: #b3b3b3; color: #fff;"}
`;
const LeafPad = styled.span<{ $w: number }>`
  width: ${(p) => p.$w}px;
  flex: none;
`;
const Splitter = styled.div`
  height: 5px;
  flex: none;
  background: ${SPLIT};
`;

/* ---------- item table ---------- */

const ItemArea = styled.div`
  flex: 467 1 0;
  min-height: 0;
  margin: 0 0 0 1px;
  position: relative;
  background: #fff;
  border: 2px solid #8f929c;
  padding: 0 2px;
`;
const ItemTable = styled.table`
  width: 100%;
  table-layout: fixed;
  border-collapse: collapse;
  th {
    height: 36px;
    padding: 5px 0 0;
    font-weight: 400;
    text-align: center;
    white-space: nowrap;
    border-right: 2px solid #e4e4e4;
    border-bottom: 2px solid #e0e0e0;
    background: linear-gradient(#fff, #f8f8f8);
  }
  th:last-child { border-right: 0; }
  td {
    height: 37px;
    padding: 2px 6px 0 14px;
    overflow: hidden;
    white-space: nowrap;
    font-size: 19px;
  }
  td:first-child { padding: 0; font-size: 20px; }
`;
const ItemRow = styled.tr<{ $on?: boolean; $dim?: boolean }>`
  ${(p) => p.$dim && "color: #808080;"}
  ${(p) => p.$on && "color: #fff; background: linear-gradient(#c8c8c8 50%, #b0b0b0 50%) center / 100% 33px no-repeat;"}
`;
const ItemCell = styled.div<{ $depth: number }>`
  display: flex;
  align-items: center;
  padding-left: ${(p) => p.$depth * 28 + 9}px;
`;
const Cropped = styled.div`
  overflow: hidden;
`;
const Spot = styled.div`
  position: absolute;
  left: 15px;
  top: 106px;
  width: 808px;
  height: 40px;
  border: 4px solid #f43b3b;
  border-radius: 5px;
`;
const Pin = styled.div`
  position: absolute;
  left: 831px;
  top: 38px;
  width: 82px;
  height: 66px;
`;
const Callout = styled.div`
  position: absolute;
  z-index: 3;
  left: 958px;
  top: 33px;
  width: 632px;
  height: 97px;
  padding-top: 11px;
  border-radius: 4px;
  background: #fff;
  box-shadow: 0 1px 2px rgba(0, 0, 0, 0.5);
  color: #fa0a2c;
  text-shadow: 1px 1px 1px rgba(120, 0, 10, 0.5);
  font-family: "Liberation Sans", Arial, sans-serif;
  font-size: 32px;
  line-height: 38px;
  text-align: center;
`;
const ViewBar = styled.div`
  height: 49px;
  flex: none;
  display: flex;
  justify-content: flex-end;
`;
const ViewButton = styled.button<{ $on?: boolean }>`
  width: 56px;
  display: flex;
  align-items: center;
  justify-content: center;
  background: ${(p) => (p.$on ? "#edfdfd" : "none")};
`;

/* ---------- plan ---------- */

const PlanPane = styled(Pane)`
  position: relative;
`;
const PlanRow = styled.div<{ $n: number }>`
  flex: ${(p) => p.$n} 1 0;
  min-height: 0;
  display: flex;
  background: #fff;
`;
const Plan = styled.div`
  flex: 1;
  min-width: 0;
  position: relative;
  border: 2px dotted #333;
  overflow: hidden;
  background: #fff;
`;
const Drawing = styled.svg`
  width: 100%;
  height: 100%;
  font-family: "DejaVu Sans", Verdana, sans-serif;
  font-size: 9px;
`;
const ChatButton = styled.button`
  position: absolute;
  right: 55px;
  bottom: 54px;
  width: 56px;
  height: 56px;
  border: 2px solid #8fc9f5;
  border-radius: 50%;
  background: #fff;
  display: flex;
  align-items: center;
  justify-content: center;
`;
const FloorRow = styled.div`
  height: 31px;
  flex: none;
  display: flex;
  align-items: center;
  background: #fff;
`;
const FloorSpace = styled.span`
  width: 19px;
`;
const FloorTab = styled.button`
  height: 30px;
  padding: 8px 13px 0 0;
  color: #00008b;
  font-size: 19px;
  font-weight: 700;
  border-right: 2px solid #c4c4c4;
`;
const Block = styled.span`
  width: 5px;
  height: 31px;
  background: ${SPLIT};
`;
const StatusRow = styled.div`
  height: 35px;
  flex: none;
  display: flex;
  align-items: center;
  gap: 8px;
  padding: 0 5px 0 2px;
  white-space: nowrap;
`;
const StatusText = styled.span`
  padding-top: 2px;
`;
const RoomPick = styled.div`
  width: 206px;
  margin-left: auto;
  display: flex;
`;
const CutView = styled.div`
  flex: 1;
  min-width: 0;
  overflow: hidden;
`;
const Cursor = styled.div`
  position: absolute;
  left: 2px;
  top: 842px;
`;

const dashStart = (top: number, first: number) => 31.55 - ((first - top) % 31.55);
type Label = { x: number; y: number; id: string; size: string; arrow: number; red?: boolean };

const Seams = ({ xs, top, bottom, first, color, w }: { xs: number[]; top: number; bottom: number; first: number; color: string; w: number }) => (
  <g stroke={color} strokeWidth={w} strokeDasharray="21 10.55" strokeDashoffset={dashStart(top, first)}>
    {xs.map((x) => (
      <path key={x} d={`M${x} ${top}V${bottom}`} />
    ))}
  </g>
);
const Labels = ({ list }: { list: Label[] }) => (
  <>
    {list.map((l) => (
      <g key={l.id} fill={l.red ? "red" : "#000"}>
        <text x={l.x} y={l.y}>{l.id}</text>
        <text x={l.x} y={l.y + 11}>{l.size}</text>
        <path d={`M${l.arrow - 1} ${l.y - 12}h2v5h1.500l-2.500 4-2.500-4h1.500z`} stroke={l.red ? "red" : "none"} />
      </g>
    ))}
  </>
);

const FloorPlan = () => (
  <Drawing role="img" aria-label="Floor plan">
    <defs>
      <pattern id="mesh" width="26.78" height="26.78" patternUnits="userSpaceOnUse" x="-6" y="14">
        <path d="M13 0V26.780M0 13H26.780" stroke="#d6d6d6" strokeWidth="2" strokeDasharray="7 3 6 3 8" />
      </pattern>
    </defs>
    <g transform="translate(-2 -2)">
      <rect width="1140" height="800" fill="url(#mesh)" />
      <path d="M500 402H1140" stroke="#666" strokeWidth="2" strokeDasharray="9 3 3 3" />

      <rect x="-40" y="27" width="542" height="387" fill="#5a2c00" stroke="#111" />
      <rect x="-40" y="30" width="539" height="382" fill={STEEL} stroke="red" strokeWidth="4" />
      <Seams xs={[79, 186, 293, 400]} top={32} bottom={411} first={44} color="red" w={4} />
      <g fill="red" fontSize="12">
        <text x="219" y="48">59'0"</text>
        <text x="148" y="170">Rm1</text>
        <text x="459" y="227">42'9"</text>
      </g>
      <Labels
        list={[
          { x: -3, y: 229, id: "L.1", size: `12'0" x 42'9"`, arrow: 26 },
          { x: 104, y: 229, id: "J.1", size: `12'0" x 42'9"`, arrow: 133 },
          { x: 211, y: 229, id: "K.1", size: `12'0" x 42'9"`, arrow: 240 },
          { x: 318, y: 229, id: "M.1", size: `12'0" x 42'9"`, arrow: 347, red: true },
          { x: 421, y: 229, id: "N.1", size: `11'0" x 42'9"`, arrow: 450 },
        ]}
      />
      <path d="M496 28h4v4h-4zM496 410h4v4h-4zM145 155h4v4h-4zM235 27l3 3-3 3-3-3zM235 409l3 3-3 3-3-3zM498 218l3 3-3 3-3-3z" fill="#400" stroke="#000" strokeWidth="2" />

      <rect x="583" y="38" width="491" height="391" fill={STEEL} stroke="#000" strokeWidth="6" />
      <rect x="583" y="38" width="491" height="391" fill="none" stroke="#d47a08" strokeWidth="2" />
      <Seams xs={[691, 798, 905, 1013]} top={41} bottom={426} first={60} color="#1414e6" w={2} />
      <g fill="#000" fontSize="12">
        <text x="808" y="56">54'10"</text>
        <text x="747" y="180">Rm2</text>
        <text x="1034" y="239">43'8"</text>
      </g>
      <Labels
        list={[
          { x: 609, y: 242, id: "F.1", size: `12'0" x 43'8"`, arrow: 638 },
          { x: 716, y: 242, id: "G.1", size: `12'0" x 43'8"`, arrow: 745 },
          { x: 823, y: 242, id: "H.1", size: `12'0" x 43'8"`, arrow: 852 },
          { x: 930, y: 242, id: "I.1", size: `12'0" x 43'8"`, arrow: 959 },
          { x: 1014, y: 242, id: "O.1", size: `6'10" x 43'8"`, arrow: 1043 },
        ]}
      />

      <rect x="-40" y="495" width="538" height="400" fill={STEEL} stroke="#000" strokeWidth="6" />
      <rect x="-40" y="495" width="538" height="400" fill="none" stroke="#a85806" strokeWidth="2" />
      <Seams xs={[76, 183, 290, 397]} top={498} bottom={900} first={516} color="#1414e6" w={2} />
      <g fill="#000" fontSize="12">
        <text x="211" y="514">60'2"</text>
        <text x="458" y="742">54'0"</text>
      </g>
      <Labels
        list={[
          { x: -6, y: 745, id: "A.1", size: `12'0" x 54'0"`, arrow: 23 },
          { x: 101, y: 745, id: "B.1", size: `12'0" x 54'0"`, arrow: 130 },
          { x: 208, y: 745, id: "C.1", size: `12'0" x 54'0"`, arrow: 237 },
          { x: 315, y: 745, id: "D.1", size: `12'0" x 54'0"`, arrow: 344 },
          { x: 418, y: 745, id: "E.1", size: `11'2" x 54'0"`, arrow: 447 },
        ]}
      />
    </g>
  </Drawing>
);

/* ---------- property pane ---------- */

const Sheet = styled.div`
  flex: 817 1 0;
  min-height: 0;
  display: flex;
  flex-direction: column;
  margin: 0 2px 0 1px;
  border: 2px solid #b4b4bc;
  background: #dcdcdc;
`;
const SheetTitle = styled.h3`
  margin: 0;
  padding: 9px 11px 0;
  height: 39px;
  flex: none;
  font-size: 19px;
  line-height: 22px;
`;
const SheetBody = styled.div`
  flex: 694 1 0;
  min-height: 0;
  display: flex;
  background: #efefef;
  border-bottom: 1px solid #ccc;
`;
const SheetFoot = styled.div`
  flex: 80 1 0;
`;
const Rows = styled.div`
  flex: 1;
  min-width: 0;
  overflow: hidden;
  padding-left: 18px;
`;
const TopMark = styled.div`
  height: 32px;
  margin-left: -7px;
  padding-top: 8px;
`;
const Prop = styled.div<{ $h: number; $head?: boolean; $end?: boolean }>`
  height: ${(p) => p.$h}px;
  display: grid;
  grid-template-columns: 263px 1fr;
  background: #fff;
  border-bottom: ${(p) => (p.$head ? 0 : 2)}px solid #ededed;
  margin-bottom: ${(p) => (p.$end ? 4 : 0)}px;
`;
const PropName = styled.label<{ $head?: boolean }>`
  display: flex;
  align-items: center;
  gap: 10px;
  padding: 3px 0 0 ${(p) => (p.$head ? 10 : 56)}px;
  border-right: 2px solid #ededed;
  white-space: nowrap;
`;
const PropValue = styled.div<{ $l?: number; $dim?: boolean }>`
  display: flex;
  align-items: center;
  min-width: 0;
  padding: ${(p) => (p.$dim ? 3 : 0)}px 3px 0 ${(p) => p.$l ?? 3}px;
  color: ${(p) => (p.$dim ? "#808080" : "#111")};
  font-size: ${(p) => (p.$dim ? 19 : 20)}px;
`;
const Report = styled.div`
  line-height: 28px;
`;
const Tick = styled.input<{ $pale?: boolean }>`
  appearance: none;
  width: 24px;
  height: 23px;
  margin: 0;
  border: 2px solid ${(p) => (p.$pale ? "#cfcdbd" : "#1c5180")};
  background: ${(p) => (p.$pale ? "#fff" : "linear-gradient(135deg, #d8d8d8, #fff)")};
`;
const ProductFrame = styled.div`
  flex: 1;
  height: 49px;
  display: flex;
  align-items: center;
  gap: 2px;
  padding: 0 8px 0 6px;
  border: 2px solid #d8d8d8;
  background: #f6f6f6;
`;
const PlusKnob = styled(Knob)`
  border-color: #1c5180;
  color: ${BLUE};
`;
const Faded = styled.span`
  opacity: 0.4;
`;
const ViewList = styled.nav`
  flex: 245 1 0;
  min-height: 0;
`;
const ViewItem = styled.a<{ $on?: boolean }>`
  height: 49px;
  display: flex;
  align-items: center;
  gap: 15px;
  padding: 2px 0 0 9px;
  border-bottom: 2px solid ${LINE};
  color: #000;
  font-size: 19px;
  font-weight: 700;
  text-decoration: none;
  background: ${(p) => (p.$on ? "#effefe" : "none")};
`;

const EstimateBox = styled.div`
  width: 224px;
  margin: 7px 0 0 7px;
  display: flex;
  flex-direction: column;
  gap: 3px;
`;
const PlayBar = styled.div`
  height: 53px;
  display: flex;
  align-items: center;
  justify-content: space-between;
  padding: 0 5px 0 7px;
  border: 2px solid #e0e0e0;
  border-radius: 4px;
`;
const ZoomBox = styled.div`
  width: 96px;
  height: 38px;
  display: flex;
  align-items: center;
  padding: 0 1px 0 6px;
  border: 2px solid #abafba;
  background: #fff;
`;
const ZoomInput = styled.input`
  flex: 1;
  min-width: 0;
  border: 0;
  padding: 0 0 0 1px;
  background: none;
  font-size: 19px;
`;

const Corner = () => (
  <svg width="10" height="10" viewBox="0 0 10 10" aria-hidden="true">
    <path d="M10 0v10H0z" />
  </svg>
);
const Section = ({ name }: { name: string }) => (
  <Prop $h={35} $head>
    <PropName as="span" $head>
      <Corner />
      {name}
    </PropName>
    <PropValue $l={8}>
      <Caret size={18} color="#808080" />
    </PropValue>
  </Prop>
);
const Fact = ({ name, value, h, l }: { name: string; value: string; h: number; l?: number }) => (
  <Prop $h={h}>
    <PropName as="span">{name}</PropName>
    <PropValue $dim $l={l}>{value}</PropValue>
  </Prop>
);

const folders = ["Laminate", "Tile", "Transitions", "Underlayment", "Vinyl", "Wallbase", "Wood"];
const erasers = [
  { name: "Areal Eraser", color: "#f00", on: true },
  { name: "Linear Eraser", color: "#008000", edge: "#008000" },
  { name: "Count Eraser", color: "#00f" },
  { name: "Room Products Eraser", color: "#0ff" },
];
const columns = [364, 131, 132, 79, 131, 105, 105, 105, 105];
const heads = ["Product", "Usage", "Usage Ext", "Boxes", "Net Area", "Waste", "Cost Amt", "Sales Amt", "Profit", ""];

export default function App() {
  return (
    <Desktop>
      <Global />
      <Window>
        <TitleBar>
          <Icon name="logo" size={36} />
          <Rule $l={20} $r={15} />
          {["file", "folder", "save", "undoS", "redoS", "gear", "dbSave"].map((n) => (
            <QuickButton key={n} aria-label={n}><Icon name={n} /></QuickButton>
          ))}
          <QuickButton aria-label="help" $w={46}><Icon name="help" /></QuickButton>
          <QuickButton aria-label="help menu" $w={14}><Caret size={9} /></QuickButton>
          <QuickButton aria-label="cloud" $w={44}><Icon name="cloud" size={30} h={28} /></QuickButton>
          <Rule $l={6} $r={9} />
          <WindowTitle>* -MeasureSquare 8 (Build10374)</WindowTitle>
          <SysButton aria-label="Minimize"><Icon name="min" size={16} /></SysButton>
          <SysButton aria-label="Restore"><Icon name="restore" size={16} /></SysButton>
          <SysButton aria-label="Close"><Icon name="close" size={16} /></SysButton>
        </TitleBar>

        <TabStrip>
          <FileTab>File <Caret size={13} color="#fff" /></FileTab>
          <Tab href="#info">Project Info</Tab>
          <Tab href="#takeoff" $on>Takeoff</Tab>
          <Tab href="#worksheet">Worksheet</Tab>
          <Tab href="#cloud">Cloud</Tab>
        </TabStrip>

        <Ribbon>
          <Group name="Import" w={247} pad={9}>
            <BigBtn icon="importB" label="Import" caret />
            <BigBtn icon="scaleB" label="Scale" />
            <BigBtn icon="disto" label="Disto" />
          </Group>
          <Group name="Room" w={315} pad={4}>
            <BigBtn icon="drawB" label="Draw" caret />
            <BigBtn icon="drawRect" label="Draw" second="Rect" />
            <Stack>
              <SmallBtn icon="door" label="Door" caret="wide" />
              <SmallBtn icon="window" label="Window" caret="wide" />
              <SmallBtn icon="stair" label="Stairway" caret="wide" />
            </Stack>
          </Group>
          <Group name="Shape" w={389} pad={7}>
            <BigBtn icon="divider" label="Divider" caret />
            <Stack $w={156}>
              <SmallBtn icon="elevation" label="Elevation" />
              <SmallBtn icon="dimension" label="Dimension" />
              <SmallBtn icon="segment" label="Segment" />
            </Stack>
            <Stack $pad={0}>
              <SmallBtn icon="note" label="Note" caret="wide" />
              <SmallBtn icon="legends" label="Legends" caret="wide" />
              <SmallBtn icon="rmedit" label="RmEdit" caret="tight" />
            </Stack>
          </Group>
          <Group name="Markup" w={278} pad={4}>
            <BigBtn icon="hgl" label="HGL" caret />
            <BigBtn icon="stamp" label="Stamp" caret />
            <Stack>
              <SmallBtn icon="line" label="Line" caret="wide" />
              <SmallBtn icon="rect" label="Rect" caret="wide" />
              <SmallBtn icon="poly" label="Poly" caret="wide" />
            </Stack>
          </Group>
          <Group name="Estimate" w={339} pad={8}>
            <BigBtn icon="estimateB" label="Estimate" caret w={90} />
            <EstimateBox>
              <Picker $h={43}>
                <Swatch $c={STEEL} />
                <PickerSelect aria-label="Estimate product"><option>vinly 12'0" SF</option></PickerSelect>
                <Chevron size={12} w={2} />
              </Picker>
              <PlayBar>
                <button aria-label="Run"><Icon name="play" size={36} /></button>
                <button aria-label="Run next"><Icon name="playR" size={36} /></button>
                <button aria-label="Run down"><Icon name="playD" size={36} /></button>
                <button aria-label="Settings"><Icon name="gear" size={38} /></button>
                <Caret size={9} />
              </PlayBar>
            </EstimateBox>
          </Group>
          <Group name="Layout, Seam &amp; Tile" w={366} pad={8}>
            <BigBtn icon="relayout" label="ReLayout" w={90} />
            <BigBtn icon="tseam" label="T-Seam" caret w={90} />
            <Stack>
              <SmallBtn icon="lockseam" label="LockSeam" caret="wide" />
              <SmallBtn icon="pattern" label="PatternPos" caret="wide" />
              <SmallBtn icon="layoutdir" label="LayoutDir" caret="wide" />
            </Stack>
          </Group>
          <Group name="Zoom" w={182} pad={4}>
            <BigBtn icon="zoomB" label="Zoom" caret />
            <Stack $pad={0}>
              <Small $in><Icon name="zin" /><span>In</span></Small>
              <Small $in><Icon name="zout" /><span>Out</span></Small>
              <ZoomBox>
                <ZoomInput aria-label="Zoom level" defaultValue="43%" />
                <Knob aria-label="Zoom levels" $w={26} $h={32}><Chevron /></Knob>
              </ZoomBox>
            </Stack>
          </Group>
          <Group name="View" w={231} pad={4}>
            <BigBtn icon="pan" label="Pan" />
            <Stack $pad={5}>
              <SmallBtn icon="viewwall" label="View Wall" />
              <SmallBtn icon="view3d" label="View3D" caret="wide" />
              <SmallBtn icon="options" label="Options" caret="tight" />
            </Stack>
          </Group>
          <Group name="Edit" w={424} pad={4}>
            <BigBtn icon="undoB" label="Undo" />
            <BigBtn icon="redoB" label="Redo" off />
            <BigBtn icon="searchB" label="Search" caret />
            <BigBtn icon="pasteB" label="Paste" off />
            <Stack $pad={4}>
              <SmallBtn icon="copy" label="Copy" />
              <SmallBtn icon="cut" label="Cut" />
              <SmallBtn icon="del" label="Delete" />
            </Stack>
          </Group>
          <Group name="Shape Edit" w={357} pad={5}>
            <BigBtn icon="rotateB" label="Rotate" caret />
            <Stack $pad={4} $w={117}>
              <SmallBtn icon="scaleS" label="Scale" />
              <SmallBtn icon="arc" label="Set Arc" />
              <SmallBtn icon="wall" label="Wall" caret="tight" />
            </Stack>
            <Stack $pad={0}>
              <SmallBtn icon="room" label="Room" />
              <SmallBtn icon="seam" label="Seam" />
              <SmallBtn icon="selectall" label="Select All" caret="wide" />
            </Stack>
          </Group>
        </Ribbon>

        <Work>
          <Pane>
            <PaneHead>
              <PaneTitle>Product/Service</PaneTitle>
              <Icon name="sq" size={13} />
              <Icon name="left2" size={14} />
            </PaneHead>
            <UnitRow>
              <UnitBox>
                <PickerSelect aria-label="Units"><option>Imperial</option></PickerSelect>
                <Knob as="span" $w={26} $h={35}><Chevron /></Knob>
              </UnitBox>
              <ToolButton aria-label="Databases"><Icon name="dbs" /></ToolButton>
            </UnitRow>
            <FilterRow $h={39}>
              <ToolButton aria-label="Add"><Icon name="addOff" size={26} /></ToolButton>
              <ToolButton aria-label="Delete"><Icon name="delOff" size={25} /></ToolButton>
              <ToolButton $w={17}>+</ToolButton>
              <ToolButton $w={18}>-</ToolButton>
              <FilterInput aria-label="Search products" placeholder="Input to search" />
              <ToolButton aria-label="Clear"><Icon name="erase" size={28} h={26} /></ToolButton>
              <ToolButton aria-label="Columns"><Icon name="grid" /></ToolButton>
            </FilterRow>
            <TreeBox>
              <TreeList>
                {folders.map((f) => (
                  <TreeRow key={f} $depth={1}>
                    <Expander aria-label={`Open ${f}`} />
                    <Icon name="treeFolder" />
                    <NodeName>{f}</NodeName>
                  </TreeRow>
                ))}
                <TreeRow $depth={1}>
                  <LeafPad $w={22} />
                  <Swatch $c="#ffc0cb" />
                  <LeafName>Carpet 3" x 4" 12'0" SY 200.00 SY/Roll</LeafName>
                </TreeRow>
                <TreeRow $depth={0}>
                  <Expander $open aria-label="Close Product Erasers" />
                  <Icon name="treeFolder" />
                  <NodeName>Product Erasers</NodeName>
                </TreeRow>
                {erasers.map((e) => (
                  <TreeRow key={e.name} $depth={1}>
                    <LeafPad $w={22} />
                    <Swatch $c={e.color} $edge={e.edge} />
                    <LeafName $on={e.on}>{e.name}</LeafName>
                  </TreeRow>
                ))}
              </TreeList>
              <Scroll size={31} a={84} t={273} b={1} />
            </TreeBox>
            <Splitter />
            <FilterRow $h={39}>
              <ToolButton aria-label="Add item"><Icon name="add" size={26} /></ToolButton>
              <ToolButton aria-label="Delete item"><Icon name="del" size={25} /></ToolButton>
              <ToolButton $w={17}>+</ToolButton>
              <ToolButton $w={18}>-</ToolButton>
              <FilterInput aria-label="Search items" placeholder="Input to search" />
              <ToolButton aria-label="Clear items"><Icon name="erase" size={28} h={26} /></ToolButton>
              <ToolButton aria-label="Warnings"><Icon name="warn" /></ToolButton>
              <ToolButton aria-label="Warning menu" $w={14}><Caret size={13} /></ToolButton>
              <ToolButton aria-label="Item columns"><Icon name="grid" /></ToolButton>
            </FilterRow>
            <ItemArea>
              <ItemTable>
                <colgroup>
                  {columns.map((w, i) => <col key={i} width={w} />)}
                  <col />
                </colgroup>
                <thead>
                  <tr>{heads.map((h, i) => <th key={i}>{h}</th>)}</tr>
                </thead>
                <tbody>
                  <ItemRow>
                    <td colSpan={10}>
                      <ItemCell $depth={0}>
                        <Expander $open aria-label="Close Project Items" />
                        <Icon name="treeFolder" />
                        <NodeName>Project Items</NodeName>
                      </ItemCell>
                    </td>
                  </ItemRow>
                  <ItemRow $dim>
                    <td colSpan={10}>
                      <ItemCell $depth={1}>
                        <LeafPad $w={22} />
                        <Swatch $c="#ff8c00" />
                        <LeafName>cpt 12" x 12" SF</LeafName>
                      </ItemCell>
                    </td>
                  </ItemRow>
                  <ItemRow $on>
                    <td>
                      <ItemCell $depth={1}>
                        <LeafPad $w={22} />
                        <Swatch $c="#808080" $edge="#808080" />
                        <LeafName>Total Seam Length 4" LF</LeafName>
                      </ItemCell>
                    </td>
                    <td>615.4 LF</td><td /><td /><td>615.4 LF</td><td>0.0%</td><td>0</td><td>0</td><td>0</td><td />
                  </ItemRow>
                  <ItemRow>
                    <td>
                      <ItemCell $depth={1}>
                        <Expander aria-label="Open vinly" />
                        <Swatch $c={STEEL} />
                        <LeafName>vinly 12'0" SF</LeafName>
                      </ItemCell>
                    </td>
                    <td>8,628.00 SF</td>
                    <td><Cropped>958.67 SY 12.00</Cropped></td>
                    <td /><td>8,161.17 SF</td><td>5.4%</td><td>0</td><td>0</td><td>0</td><td />
                  </ItemRow>
                </tbody>
              </ItemTable>
              <Spot />
              <Pin>
                <svg width="82" height="66" viewBox="0 0 82 66">
                  <path d="M1 64L24 24A29 30 0 1 1 52 60q-10 0-16-3z" fill="#f43b3b" />
                  <text x="42" y="42" fontSize="34" fill="#fff" fontFamily="Open Sans, sans-serif">7</text>
                </svg>
              </Pin>
              <Callout>
                Now the quantity of this linear add-on
                <br />
                product is the total seam length
              </Callout>
            </ItemArea>
            <Dots />
            <ViewBar>
              <ViewButton $on aria-label="Boxes"><Icon name="boxes" size={38} /></ViewButton>
              <ViewButton aria-label="Tiles"><Icon name="tiles" size={40} /></ViewButton>
              <ViewButton aria-label="Planks"><Icon name="wood" size={40} /></ViewButton>
              <ViewButton aria-label="Materials"><Icon name="matA" size={42} /></ViewButton>
              <ViewButton aria-label="Room materials"><Icon name="matB" size={42} /></ViewButton>
            </ViewBar>
          </Pane>

          <PlanPane>
            <PlanRow $n={797}>
              <Plan>
                <FloorPlan />
                <ChatButton aria-label="Chat">
                  <svg width="29" height="26" viewBox="0 0 29 26">
                    <path d="M1 1h27v19h-4v5l-7-5H1z" fill="#0a7cff" />
                    <path d="M5 6h8M15 6h9M5 10h5M12 10h12M5 15h11M18 15h6" stroke="#fff" strokeWidth="2" />
                  </svg>
                </ChatButton>
              </Plan>
              <Scroll size={31} a={319} t={101} b={318} />
            </PlanRow>
            <FloorRow>
              <ToolButton aria-label="Floors"><Caret dir="up" size={11} /></ToolButton>
              <ToolButton aria-label="Add floor" $w={36}><Icon name="add" size={22} /></ToolButton>
              <ToolButton aria-label="Previous floor" $w={18}><Caret dir="left" size={11} /></ToolButton>
              <FloorSpace />
              <FloorTab>Main Floor</FloorTab>
              <Gap $n={1} />
              <ToolButton aria-label="Next floor" $w={20}><Caret dir="right" size={12} /></ToolButton>
              <Block />
              <Scroll dir="h" size={260} a={140} t={40} b={53} />
              <Block />
              <Slider type="range" aria-label="Plan zoom" min={0} max={100} defaultValue={38} />
            </FloorRow>
            <StatusRow>
              <StatusText>Ready</StatusText>
              <RoomPick>
                <Picker $h={35} $flat $grow>
                  <PickerSelect aria-label="Room"><option>Rm1</option></PickerSelect>
                  <Chevron size={12} w={2} />
                </Picker>
              </RoomPick>
              <StatusText>Selected: 1 Area: 2,520.15 SF Perimeter: 203'5"</StatusText>
              <ToolButton aria-label="Collapse"><Icon name="ddown" size={24} /></ToolButton>
              <ToolButton aria-label="Maximize" $w={24}><Icon name="dbox" size={24} /></ToolButton>
            </StatusRow>
            <Splitter />
            <PlanRow $n={216}>
              <CutView>
                <svg width="100%" height="100%" fontFamily="DejaVu Sans, Verdana, sans-serif" fontSize="18" fill="#111" role="img" aria-label="Cut view">
                  <path d="M3 64H594V320H3z" fill={STEEL} />
                  <path d="M594 64V320" stroke="#8b0000" strokeWidth="2" />
                  <path d="M3 62H1140" stroke="#00008b" strokeWidth="2" />
                  <text x="216" y="22" textAnchor="end">8,161.17 SF (906.80 SY)</text>
                  <text x="80" y="159">B.1.Rm3</text>
                  <text x="80" y="180">12'0" x 54'3"</text>
                </svg>
              </CutView>
              <Scroll size={31} a={1} t={22} b={136} grip={false} />
            </PlanRow>
            <FloorRow>
              <Scroll dir="h" size={905} a={412} t={376} b={55} />
              <Slider type="range" aria-label="Cut zoom" min={0} max={100} defaultValue={47} />
            </FloorRow>
            <Cursor>
              <svg width="20" height="30" viewBox="0 0 20 30">
                <path d="M1 1v22l5-5 5 10 4-2-5-9h8z" fill="#fff" stroke="#222" />
              </svg>
            </Cursor>
          </PlanPane>

          <Pane>
            <PaneHead>
              <PaneTitle>Property View</PaneTitle>
              <Icon name="down2" size={14} />
              <Icon name="sq" size={13} />
              <Icon name="right2" size={14} />
            </PaneHead>
            <Sheet>
              <SheetTitle>Many</SheetTitle>
              <SheetBody>
                <Rows>
                  <TopMark><Corner /></TopMark>
                  <Section name="Cut" />
                  <Fact name="Name" value="M.1" h={34} l={8} />
                  <Fact name="Area" value="512.70 SF" h={38} />
                  <Prop $h={37}>
                    <PropName htmlFor="first">First Cut</PropName>
                    <PropValue $l={0}><Tick id="first" type="checkbox" $pale disabled /></PropValue>
                  </Prop>
                  <Prop $h={39} $end>
                    <PropName htmlFor="dye">Dye Lot (Auto)</PropName>
                    <PropValue $l={0}>
                      <Picker $h={37} $flat $grow>
                        <PickerSelect id="dye" disabled><option></option></PickerSelect>
                        <Faded><Chevron size={12} w={2} /></Faded>
                      </Picker>
                    </PropValue>
                  </Prop>
                  <Section name="Region" />
                  <Fact name="Area" value="2,520.15 SF" h={34} />
                  <Fact name="Perimeter" value={`203'5"`} h={38} />
                  <Prop $h={51}>
                    <PropName htmlFor="product">Product</PropName>
                    <PropValue $l={1}>
                      <ProductFrame>
                        <Picker $h={42} $grow>
                          <Swatch $c={STEEL} />
                          <PickerSelect id="product"><option>vinly 12'0" SF</option></PickerSelect>
                          <Chevron size={12} w={2} />
                        </Picker>
                        <PlusKnob aria-label="Add product" $w={26} $h={40}>+</PlusKnob>
                      </ProductFrame>
                    </PropValue>
                  </Prop>
                  <Prop $h={124}>
                    <PropName as="span">Report</PropName>
                    <PropValue $l={8}>
                      <Report>
                        Cut Count: 5<br />Seam Length: 170'11"<br />Total Seam Length 170.9 LF<br />vinly 2,664.31 SF
                      </Report>
                    </PropValue>
                  </Prop>
                  <Prop $h={35}>
                    <PropName htmlFor="lld">Lock Layout Direction</PropName>
                    <PropValue $l={7}><Tick id="lld" type="checkbox" /></PropValue>
                  </Prop>
                  <Prop $h={37} $end>
                    <PropName htmlFor="ls">Lock Seam</PropName>
                    <PropValue $l={7}><Tick id="ls" type="checkbox" /></PropValue>
                  </Prop>
                  <Section name="Floor" />
                  <Fact name="Area" value="2,520.15 SF" h={34} />
                  <Fact name="Perimeter" value={`203'5"`} h={38} />
                  <Fact name="" value="" h={20} />
                </Rows>
                <Scroll size={29} a={1} t={389} b={244} />
              </SheetBody>
              <SheetFoot />
            </Sheet>
            <Dots />
            <ViewList>
              <ViewItem href="#property" $on><Icon name="vProp" size={40} h={38} />Property View</ViewItem>
              <ViewItem href="#estimation"><Icon name="vEst" size={40} h={38} />Estimation View</ViewItem>
              <ViewItem href="#room"><Icon name="vRoom" size={40} h={38} />Room View</ViewItem>
              <ViewItem href="#tab"><Icon name="vTab" size={40} h={38} />Tab View</ViewItem>
            </ViewList>
          </Pane>
        </Work>
      </Window>
    </Desktop>
  );
}
